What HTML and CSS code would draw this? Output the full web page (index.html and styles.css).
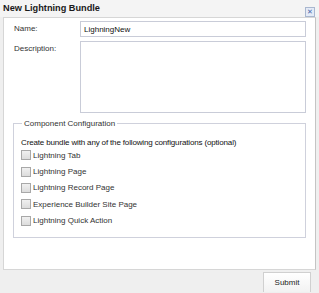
FILE: index.html
```html
<!DOCTYPE html>
<html>
<head>
	<meta charset="utf-8">
	<title>New Lightning Bundle</title>
	<link rel="stylesheet" href="styles.css">
</head>
<body>
	<div class="dialog">
		<div class="title-bar">
			<span class="title">New Lightning Bundle</span>
			<span class="close">&#x2715;</span>
		</div>
		<div class="content">
			<div class="row">
				<label class="lbl">Name:</label>
				<input type="text" class="txt" value="LighningNew">
			</div>
			<div class="row">
				<label class="lbl">Description:</label>
				<textarea class="area"></textarea>
			</div>
			<fieldset class="config">
				<legend>Component Configuration</legend>
				<div class="hint">Create bundle with any of the following configurations (optional)</div>
				<label class="opt"><span class="box"></span>Lightning Tab</label>
				<label class="opt"><span class="box"></span>Lightning Page</label>
				<label class="opt"><span class="box"></span>Lightning Record Page</label>
				<label class="opt"><span class="box"></span>Experience Builder Site Page</label>
				<label class="opt"><span class="box"></span>Lightning Quick Action</label>
			</fieldset>
		</div>
		<div class="footer">
			<button class="submit">Submit</button>
		</div>
	</div>
</body>
</html>
```
FILE: styles.css
```css
html,body{
	margin:0;
	height:100%;
}
body{
	font-family:"Liberation Sans",Arial,sans-serif;
	font-size:8px;
	color:#222;
	background:#fff;
}
.dialog{
	width:319px;
	height:293px;
	background:#efefef;
	display:flex;
	flex-direction:column;
	box-sizing:border-box;
}
.title-bar{
	height:17px;
	display:flex;
	align-items:center;
	justify-content:space-between;
	padding:0 4px 0 3px;
	box-sizing:border-box;
	background:#f4f4f4;
}
.title{
	font-weight:bold;
	font-size:9.2px;
	color:#1a1a1a;
	margin-top:-1px;
}
.close{
	width:8px;
	height:8px;
	border:1px solid #a9b7cf;
	background:#e4ebf7;
	color:#4a67a8;
	font-size:7px;
	line-height:8px;
	text-align:center;
	margin-top:6px;
}
.content{
	flex:1;
	margin:0 3px;
	background:#fff;
	border:1px solid #d6d6d6;
	border-right-color:#c4c4c4;
	padding:3px 9px 0 9px;
}
.row{
	display:flex;
	margin-bottom:4px;
}
.lbl{
	width:66px;
	padding:3px 0 0 1px;
	color:#333;
}
.txt,.area{
	width:226px;
	box-sizing:border-box;
	border:1px solid #c9ccd8;
	margin:0;
	font-family:"Liberation Sans",Arial,sans-serif;
	font-size:8px;
	color:#111;
	outline:none;
}
.txt{
	height:16px;
	padding:0 3px;
}
.area{
	height:72px;
	resize:none;
	padding:2px;
}
.config{
	margin:6px 0 0 0;
	border:1px solid #cfd1dc;
	padding:4px 7px 5px 7px;
	height:119px;
	box-sizing:border-box;
}
.config legend{
	padding:0 2px;
	margin-left:1px;
	color:#333;
}
.hint{
	margin-top:6px;
	color:#111;
	letter-spacing:-0.15px;
}
.opt{
	display:flex;
	align-items:center;
	height:16.4px;
	color:#333;
}
.box{
	width:8px;
	height:8px;
	border:1px solid #a8a8a8;
	background:linear-gradient(#f0f0f0,#dcdcdc);
	margin-right:2px;
}
.footer{
	height:23px;
	display:flex;
	justify-content:flex-end;
	align-items:flex-end;
	padding:0 8px 1px 0;
	box-sizing:border-box;
}
.submit{
	width:48px;
	height:20px;
	border:1px solid #d0d0d0;
	border-bottom:none;
	background:linear-gradient(#ffffff,#f2f2f2);
	font-family:"Liberation Sans",Arial,sans-serif;
	font-size:8px;
	color:#222;
	padding:0;
}
```
